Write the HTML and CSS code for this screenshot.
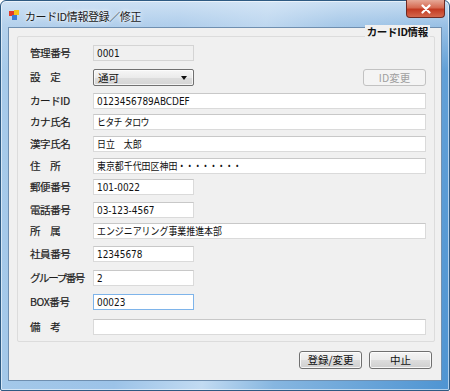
FILE: index.html
```html
<!DOCTYPE html>
<html lang="ja">
<head>
<meta charset="utf-8">
<link rel="stylesheet" href="styles.css">
</head>
<body>
<div class="window">
  <div class="titlebar">
    <svg class="appicon" width="10" height="10" viewBox="0 0 10 10">
      <rect x="0" y="1" width="5" height="5" fill="#e03a2a"/>
      <rect x="5" y="0" width="5" height="5" fill="#f4c21c"/>
      <rect x="3" y="5" width="5" height="5" fill="#3a7bd5"/>
    </svg>
    <span class="title">カードID情報登録／修正</span>
    <div class="close"><svg width="12" height="10" viewBox="0 0 12 10"><path d="M2.5 1.5 L9.5 8.5 M9.5 1.5 L2.5 8.5" stroke="#fff" stroke-width="2.2" stroke-linecap="round"/></svg></div>
  </div>
  <div class="client">
    <div class="group">
      <div class="legend">カードID情報</div>
      <div class="form">
        <div class="lbl">管理番号</div>
        <div class="row"><div class="field short disabled"><span class="txt">0001</span></div></div>

        <div class="lbl">設　定</div>
        <div class="row between">
          <div class="combo"><span class="ctxt">通可</span><span class="arrow"></span></div>
          <div class="btn small disabledbtn">ID変更</div>
        </div>

        <div class="lbl">カードID</div>
        <div class="row"><div class="field"><span class="txt">0123456789ABCDEF</span></div></div>

        <div class="lbl">カナ氏名</div>
        <div class="row"><div class="field"><span class="txt kana">ヒタチ タロウ</span></div></div>

        <div class="lbl">漢字氏名</div>
        <div class="row"><div class="field"><span class="txt">日立　太郎</span></div></div>

        <div class="lbl">住　所</div>
        <div class="row"><div class="field"><span class="txt">東京都千代田区神田<span class="dots">・・・・・・・・</span></span></div></div>

        <div class="lbl">郵便番号</div>
        <div class="row"><div class="field short"><span class="txt">101-0022</span></div></div>

        <div class="lbl">電話番号</div>
        <div class="row"><div class="field short"><span class="txt">03-123-4567</span></div></div>

        <div class="lbl">所　属</div>
        <div class="row"><div class="field"><span class="txt">エンジニアリング事業推進本部</span></div></div>

        <div class="lbl">社員番号</div>
        <div class="row"><div class="field short"><span class="txt">12345678</span></div></div>

        <div class="lbl tight">グループ番号</div>
        <div class="row"><div class="field short"><span class="txt">2</span></div></div>

        <div class="lbl">BOX番号</div>
        <div class="row"><div class="field short focus"><span class="txt">00023</span></div></div>

        <div class="lbl">備　考</div>
        <div class="row"><div class="field"></div></div>
      </div>
    </div>
    <div class="buttons">
      <div class="btn">登録/変更</div>
      <div class="btn">中止</div>
    </div>
  </div>
</div>
</body>
</html>
```
FILE: styles.css
```css
html, body {
  margin: 0;
  padding: 0;
  background: #ffffff;
}
body {
  width: 450px;
  height: 391px;
  overflow: hidden;
  font-family: "Noto Sans CJK JP", "Noto Sans", sans-serif;
}
.window {
  width: 450px;
  height: 391px;
  box-sizing: border-box;
  border: 1px solid #2e5a82;
  border-radius: 6px 6px 2px 2px;
  background:
    linear-gradient(180deg, rgba(214,230,246,0.85) 0px, rgba(190,214,238,0.6) 24px, rgba(120,175,225,0) 70px),
    linear-gradient(100deg, #a8cbea 0%, #9cc3e8 35%, #c2dbf2 52%, #86b6e0 66%, #4e94d2 100%);
  display: flex;
  flex-direction: column;
  padding: 0 7px 9px 7px;
  box-shadow: inset 0 0 0 1px rgba(255,255,255,0.55);
}
.titlebar {
  height: 26px;
  display: flex;
  align-items: center;
  position: relative;
  flex: none;
}
.appicon {
  margin-left: 1px;
  margin-top: 2px;
}
.title {
  margin-left: 6px;
  margin-top: 3px;
  font-size: 11px;
  color: #1a1a1a;
  text-shadow: 0 0 6px #ffffff, 0 0 3px #ffffff;
  letter-spacing: -0.4px;
}
.close {
  position: absolute;
  right: -3px;
  top: -1px;
  width: 39px;
  height: 18px;
  box-sizing: border-box;
  border: 1px solid #6d2a24;
  border-top: none;
  border-radius: 0 0 4px 4px;
  background: linear-gradient(#e6a897 0%, #d66a52 45%, #c23a22 55%, #d4674c 100%);
  display: flex;
  align-items: center;
  justify-content: center;
}
.client {
  flex: 1;
  background: #f0f0f0;
  border: 1px solid #6f8fb0;
  position: relative;
  box-sizing: border-box;
  padding: 8px 6px 0 8px;
  display: flex;
  flex-direction: column;
}
.group {
  position: relative;
  border: 1px solid #dcdcdc;
  border-radius: 2px;
  padding: 8px 8px 7px 12px;
  height: 306px;
  box-sizing: border-box;
}
.legend {
  position: absolute;
  right: 4px;
  top: -12px;
  background: #f0f0f0;
  padding: 0 2px;
  font-size: 10.5px;
  font-weight: bold;
  color: #111;
  line-height: 14px;
  letter-spacing: -0.3px;
}
.form {
  display: grid;
  grid-template-columns: 63px 1fr;
  grid-template-rows: 24px 24px 21px 22px 22px 21px 23px 21px 23px 24px 24px 25px 16px;
}
.lbl {
  font-size: 10.5px;
  color: #1c1c1c;
  line-height: 16px;
  white-space: nowrap;
  letter-spacing: -0.4px;
  -webkit-text-stroke: 0.2px #1c1c1c;
}
.tight {
  letter-spacing: -1.4px;
}
.row {
  display: flex;
  align-items: flex-start;
}
.between {
  justify-content: space-between;
}
.field {
  width: 100%;
  height: 16px;
  box-sizing: border-box;
  background: #ffffff;
  border: 1px solid #dadada;
  border-top-color: #c8c8c8;
  padding-left: 3px;
  white-space: nowrap;
  overflow: hidden;
  display: flex;
  align-items: center;
}
.txt {
  display: block;
  font-family: "DejaVu Sans", "Noto Sans CJK JP", sans-serif;
  font-size: 10.5px;
  line-height: 14px;
  color: #111;
  transform: scaleX(0.85);
  transform-origin: left center;
  white-space: nowrap;
}
.kana {
  letter-spacing: -0.8px;
}
.dots {
  letter-spacing: -1.2px;
}
.short {
  width: 101px;
}
.disabled {
  background: #f0f0f0;
  border-color: #d4d4d4;
}
.focus {
  border-color: #7eb4ea;
}
.combo {
  width: 101px;
  height: 17px;
  box-sizing: border-box;
  border: 1px solid #707070;
  border-radius: 2px;
  background: linear-gradient(#f6f6f6 0%, #ebebeb 50%, #dddddd 51%, #d4d4d4 100%);
  padding-left: 4px;
  color: #111;
  display: flex;
  align-items: center;
  justify-content: space-between;
  box-shadow: inset 0 0 0 1px rgba(255,255,255,0.7);
}
.ctxt {
  font-size: 10.5px;
  line-height: 15px;
}
.arrow {
  width: 0;
  height: 0;
  border-left: 3.5px solid transparent;
  border-right: 3.5px solid transparent;
  border-top: 4px solid #111;
  margin-right: 6px;
}
.btn {
  height: 18px;
  box-sizing: border-box;
  border: 1px solid #707070;
  border-radius: 3px;
  background: linear-gradient(#f4f4f4 0%, #ebebeb 50%, #dddddd 51%, #cfcfcf 100%);
  box-shadow: inset 0 0 0 1px rgba(255,255,255,0.8);
  font-size: 10.5px;
  line-height: 16px;
  text-align: center;
  color: #111;
  width: 63px;
}
.small {
  height: 17px;
}
.disabledbtn {
  background: #f4f4f4;
  border-color: #c2c2c2;
  color: #a0a0a0;
  box-shadow: none;
}
.buttons {
  display: flex;
  justify-content: flex-end;
  gap: 7px;
  margin-top: 9px;
  margin-right: 3px;
}
```
